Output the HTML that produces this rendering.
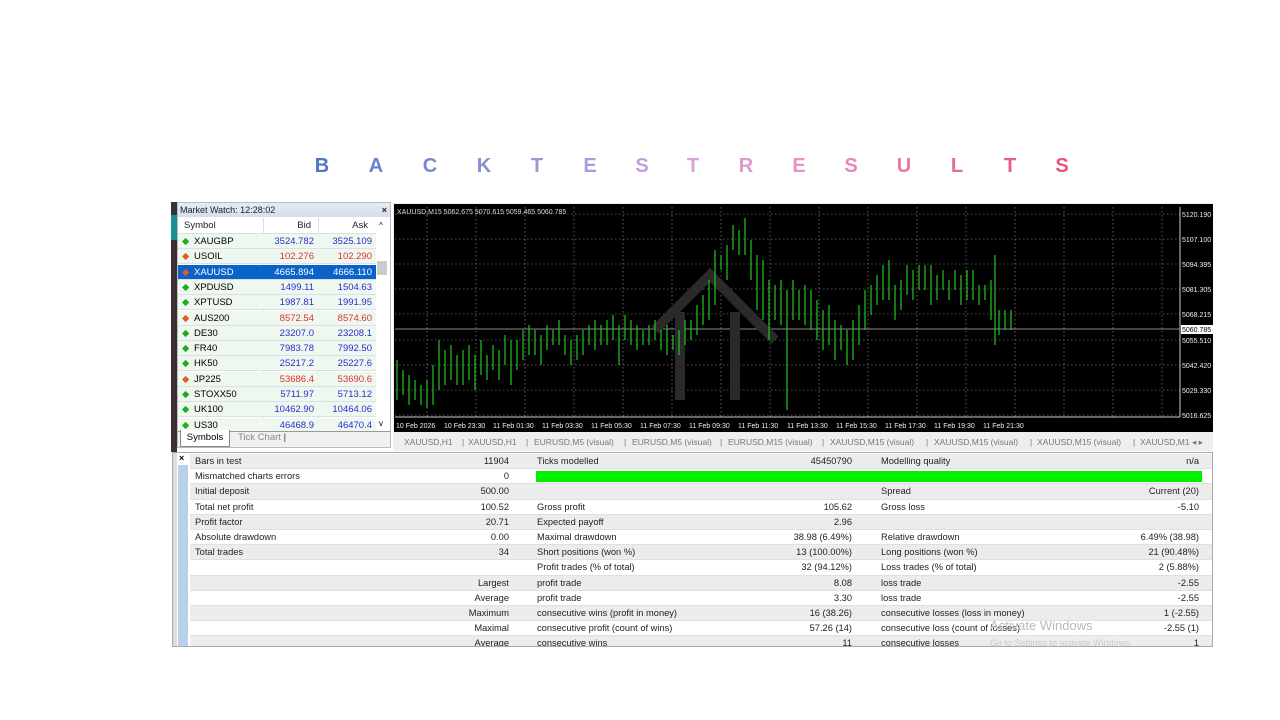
<!DOCTYPE html>
<html><head><meta charset="utf-8"><style>
*{margin:0;padding:0;box-sizing:border-box}
body{width:1280px;height:720px;background:#fff;position:relative;overflow:hidden;font-family:"Liberation Sans",sans-serif}
.t{position:absolute;top:155px;font-size:20px;font-weight:bold;transform:translateX(-50%);opacity:0.92}
.a{position:absolute;white-space:nowrap}
.mw{position:absolute;left:177px;top:202px;width:214px;height:246px;background:#fff;border:1px solid #bbb}
.row{position:absolute;left:0;width:198px;height:15px;font-size:9.5px;line-height:15px;background:#eef8ee;border-bottom:1px solid #dde}
.row span{position:absolute}
.res{position:absolute;left:172px;top:452px;width:1041px;height:195px;background:#fff;border:1px solid #aaa;overflow:hidden}
.r{position:absolute;left:17px;width:1022px;height:15.2px;font-size:9.3px;line-height:15px;color:#222;border-bottom:1px solid #e0e0e0}
.r span{position:absolute;white-space:nowrap}
</style></head><body>
<div class="t" style="left:322px;color:#3f6cb8">B</div>
<div class="t" style="left:376px;color:#5b78c2">A</div>
<div class="t" style="left:430px;color:#6e80c8">C</div>
<div class="t" style="left:484px;color:#8087cc">K</div>
<div class="t" style="left:537px;color:#9290d2">T</div>
<div class="t" style="left:590px;color:#a693d8">E</div>
<div class="t" style="left:642px;color:#be95da">S</div>
<div class="t" style="left:693px;color:#d69ad8">T</div>
<div class="t" style="left:746px;color:#dd90c8">R</div>
<div class="t" style="left:799px;color:#e38ac4">E</div>
<div class="t" style="left:851px;color:#e67eb2">S</div>
<div class="t" style="left:904px;color:#e66d9c">U</div>
<div class="t" style="left:957px;color:#e65e86">L</div>
<div class="t" style="left:1010px;color:#e65276">T</div>
<div class="t" style="left:1062px;color:#e64868">S</div>

<div class="a" style="left:171px;top:202px;width:6px;height:250px;background:#3a3230"></div>
<div class="a" style="left:171px;top:215px;width:6px;height:25px;background:#1a8f95"></div>

<div class="mw">
<div class="a" style="left:0;top:0;width:212px;height:14px;background:linear-gradient(#e4ecf6,#d4deec);font-size:9px;line-height:14px;padding-left:2px;color:#222">Market Watch: 12:28:02<span style="position:absolute;right:3px;font-weight:bold">×</span></div>
<div class="a" style="left:0;top:15px;width:198px;height:16px;font-size:9.5px;line-height:16px;border-bottom:1px solid #ddd;color:#222"><span class="a" style="left:6px">Symbol</span><span class="a" style="right:65px">Bid</span><span class="a" style="right:8px">Ask</span></div>
<div class="a" style="left:85px;top:15px;width:1px;height:212px;background:#ddd"></div>
<div class="a" style="left:140px;top:15px;width:1px;height:212px;background:#ddd"></div>
<div class="a" style="left:199px;top:58px;width:10px;height:14px;background:#ccc"></div>
<div class="a" style="left:201px;top:18px;font-size:8px">^</div>
<div class="a" style="left:201px;top:216px;font-size:8px">v</div>
</div>
<div id="mwrows" style="position:absolute;left:178px;top:234px">
<div class="row" style="top:0"><span style="left:4px;color:#2a2">◆</span><span style="left:16px">XAUGBP</span><span style="right:62px;color:#2b2bd0">3524.782</span><span style="right:4px;color:#2b2bd0">3525.109</span></div>
<div class="row" style="top:15.3px"><span style="left:4px;color:#e05a2a">◆</span><span style="left:16px">USOIL</span><span style="right:62px;color:#e03030">102.276</span><span style="right:4px;color:#e03030">102.290</span></div>
<div class="row" style="top:30.6px;background:#0a64c8;color:#fff"><span style="left:4px;color:#e05a2a">◆</span><span style="left:16px">XAUUSD</span><span style="right:62px">4665.894</span><span style="right:4px">4666.110</span></div>
<div class="row" style="top:45.9px"><span style="left:4px;color:#2a2">◆</span><span style="left:16px">XPDUSD</span><span style="right:62px;color:#2b2bd0">1499.11</span><span style="right:4px;color:#2b2bd0">1504.63</span></div>
<div class="row" style="top:61.2px"><span style="left:4px;color:#2a2">◆</span><span style="left:16px">XPTUSD</span><span style="right:62px;color:#2b2bd0">1987.81</span><span style="right:4px;color:#2b2bd0">1991.95</span></div>
<div class="row" style="top:76.5px"><span style="left:4px;color:#e05a2a">◆</span><span style="left:16px">AUS200</span><span style="right:62px;color:#e03030">8572.54</span><span style="right:4px;color:#e03030">8574.60</span></div>
<div class="row" style="top:91.8px"><span style="left:4px;color:#2a2">◆</span><span style="left:16px">DE30</span><span style="right:62px;color:#2b2bd0">23207.0</span><span style="right:4px;color:#2b2bd0">23208.1</span></div>
<div class="row" style="top:107.1px"><span style="left:4px;color:#2a2">◆</span><span style="left:16px">FR40</span><span style="right:62px;color:#2b2bd0">7983.78</span><span style="right:4px;color:#2b2bd0">7992.50</span></div>
<div class="row" style="top:122.4px"><span style="left:4px;color:#2a2">◆</span><span style="left:16px">HK50</span><span style="right:62px;color:#2b2bd0">25217.2</span><span style="right:4px;color:#2b2bd0">25227.6</span></div>
<div class="row" style="top:137.7px"><span style="left:4px;color:#e05a2a">◆</span><span style="left:16px">JP225</span><span style="right:62px;color:#e03030">53686.4</span><span style="right:4px;color:#e03030">53690.6</span></div>
<div class="row" style="top:153px"><span style="left:4px;color:#2a2">◆</span><span style="left:16px">STOXX50</span><span style="right:62px;color:#2b2bd0">5711.97</span><span style="right:4px;color:#2b2bd0">5713.12</span></div>
<div class="row" style="top:168.3px"><span style="left:4px;color:#2a2">◆</span><span style="left:16px">UK100</span><span style="right:62px;color:#2b2bd0">10462.90</span><span style="right:4px;color:#2b2bd0">10464.06</span></div>
<div class="row" style="top:183.6px"><span style="left:4px;color:#2a2">◆</span><span style="left:16px">US30</span><span style="right:62px;color:#2b2bd0">46468.9</span><span style="right:4px;color:#2b2bd0">46470.4</span></div>
</div>
<div class="a" style="left:178px;top:431px;width:212px;height:16px;background:#f0f0f0;border-top:1px solid #999;font-size:9.5px"></div>
<div class="a" style="left:180px;top:430px;width:50px;height:17px;background:#fff;border:1px solid #888;border-top:none;font-size:9.5px;line-height:15px;text-align:center">Symbols</div>
<div class="a" style="left:238px;top:432px;font-size:9.5px;color:#888">Tick Chart <span style="color:#333">|</span></div>

<svg class="a" style="left:393px;top:203px" width="820" height="248" viewBox="393 203 820 248">
<rect x="393" y="203" width="820" height="248" fill="#eee"/>
<rect x="394" y="204" width="819" height="228" fill="#000"/>
<g stroke="#9a9a9a" stroke-width="0.6" stroke-dasharray="1.5,2.5">
<line x1="395" y1="214" x2="1180" y2="214"/><line x1="395" y1="239" x2="1180" y2="239"/><line x1="395" y1="264" x2="1180" y2="264"/><line x1="395" y1="289" x2="1180" y2="289"/><line x1="395" y1="314" x2="1180" y2="314"/><line x1="395" y1="340" x2="1180" y2="340"/><line x1="395" y1="365" x2="1180" y2="365"/><line x1="395" y1="390" x2="1180" y2="390"/><line x1="395" y1="415" x2="1180" y2="415"/>
<line x1="427" y1="207" x2="427" y2="417"/><line x1="476" y1="207" x2="476" y2="417"/><line x1="525" y1="207" x2="525" y2="417"/><line x1="574" y1="207" x2="574" y2="417"/><line x1="623" y1="207" x2="623" y2="417"/><line x1="672" y1="207" x2="672" y2="417"/><line x1="721" y1="207" x2="721" y2="417"/><line x1="770" y1="207" x2="770" y2="417"/><line x1="819" y1="207" x2="819" y2="417"/><line x1="868" y1="207" x2="868" y2="417"/><line x1="917" y1="207" x2="917" y2="417"/><line x1="966" y1="207" x2="966" y2="417"/><line x1="1015" y1="207" x2="1015" y2="417"/><line x1="1064" y1="207" x2="1064" y2="417"/><line x1="1113" y1="207" x2="1113" y2="417"/><line x1="1162" y1="207" x2="1162" y2="417"/>
</g>
<line x1="395" y1="329" x2="1180" y2="329" stroke="#888" stroke-width="1"/>
<path d="M655 330 L710 275 L775 340 M680 312 V400 M735 312 V400" stroke="#2a2a2a" stroke-width="10" fill="none"/>
<line x1="1180" y1="207" x2="1180" y2="417" stroke="#ccc"/>
<line x1="395" y1="417" x2="1180" y2="417" stroke="#ccc"/>
<g stroke="#22c422" stroke-width="1.2" fill="none">
<path d="M397 360V400M403 370V395M409 375V405M415 380V400M421 385V405M427 380V408M433 365V405M439 340V390M445 350V385M451 345V380M457 355V385M463 350V385M469 345V380M475 355V390M481 340V375M487 355V380M493 345V370M499 350V380M505 335V365M511 340V385M517 340V370M523 330V360M529 325V355M535 330V355M541 335V365M547 325V350M553 330V345M559 320V345M565 335V355M571 340V365M577 335V360M583 330V355M589 325V345M595 320V350M601 325V345M607 320V345M613 315V340M619 325V365M625 315V340M631 320V345M637 325V350M643 330V345M649 325V345M655 320V340M661 330V350M667 325V355M673 335V350M679 330V355M685 320V345M691 320V340M697 305V335M703 295V325M709 280V320M715 250V305M721 255V270M727 245V280M733 225V250M739 230V255M745 218V255M751 240V280M757 255V310M763 260V320M769 280V340M775 285V320M781 280V325M787 290V410M793 280V320M799 290V320M805 285V325M811 290V330M817 300V340M823 310V350M829 305V345M835 320V360M841 325V350M847 330V365M853 320V360M859 305V345M865 290V330M871 285V315M877 275V305M883 265V300M889 260V300M895 285V320M901 280V310M907 265V295M913 270V300M919 265V290M925 265V290M931 265V305M937 275V300M943 270V290M949 280V300M955 270V290M961 275V305M967 270V300M973 270V300M979 285V305M985 285V300M991 280V320M995 255V345M999 310V335M1005 310V330M1011 310V330"/>
</g>
<text x="397" y="214" fill="#ddd" font-size="7" font-family="Liberation Sans">XAUUSD,M15  5062.675 5070.615 5059.465 5060.785</text>
<g fill="#eee" font-size="7" font-family="Liberation Sans">
<text x="396" y="428">10 Feb 2026</text><text x="444" y="428">10 Feb 23:30</text><text x="493" y="428">11 Feb 01:30</text><text x="542" y="428">11 Feb 03:30</text><text x="591" y="428">11 Feb 05:30</text><text x="640" y="428">11 Feb 07:30</text><text x="689" y="428">11 Feb 09:30</text><text x="738" y="428">11 Feb 11:30</text><text x="787" y="428">11 Feb 13:30</text><text x="836" y="428">11 Feb 15:30</text><text x="885" y="428">11 Feb 17:30</text><text x="934" y="428">11 Feb 19:30</text><text x="983" y="428">11 Feb 21:30</text>
<text x="1182" y="217">5120.190</text><text x="1182" y="242">5107.100</text><text x="1182" y="267">5094.395</text><text x="1182" y="292">5081.305</text><text x="1182" y="317">5068.215</text><text x="1182" y="343">5055.510</text><text x="1182" y="368">5042.420</text><text x="1182" y="393">5029.330</text><text x="1182" y="418">5016.625</text>
</g>
<rect x="1181" y="325" width="32" height="9" fill="#fff"/><text x="1182" y="332" fill="#000" font-size="7" font-family="Liberation Sans">5060.785</text>
<g fill="#777" font-size="8.5" font-family="Liberation Sans">
<text x="404" y="445">XAUUSD,H1</text><text x="462" y="445">|</text><text x="468" y="445">XAUUSD,H1</text><text x="526" y="445">|</text><text x="534" y="445">EURUSD,M5 (visual)</text><text x="624" y="445">|</text><text x="632" y="445">EURUSD,M5 (visual)</text><text x="720" y="445">|</text><text x="728" y="445">EURUSD,M15 (visual)</text><text x="822" y="445">|</text><text x="830" y="445">XAUUSD,M15 (visual)</text><text x="926" y="445">|</text><text x="934" y="445">XAUUSD,M15 (visual)</text><text x="1030" y="445">|</text><text x="1037" y="445">XAUUSD,M15 (visual)</text><text x="1133" y="445">|</text><text x="1140" y="445">XAUUSD,M1 ◂ ▸</text>
</g>
</svg>

<div class="res">
<div class="a" style="left:0;top:0;width:4px;height:195px;background:#ddd"></div>
<div class="a" style="left:5px;top:12px;width:10px;height:183px;background:#b8d0ea"></div>
<div class="a" style="left:6px;top:0;font-size:9px;font-weight:bold">×</div>
<div class="r" style="top:1px;background:#ececec"><span style="left:5px">Bars in test</span><span style="right:703px">11904</span><span style="left:347px">Ticks modelled</span><span style="right:360px">45450790</span><span style="left:691px">Modelling quality</span><span style="right:13px">n/a</span></div>
<div class="r" style="top:16.2px;background:#fff"><span style="left:5px">Mismatched charts errors</span><span style="right:703px">0</span><span style="left:346px;top:2px;width:666px;height:11px;background:#00f000"></span></div>
<div class="r" style="top:31.4px;background:#ececec"><span style="left:5px">Initial deposit</span><span style="right:703px">500.00</span><span style="left:691px">Spread</span><span style="right:13px">Current (20)</span></div>
<div class="r" style="top:46.6px;background:#fff"><span style="left:5px">Total net profit</span><span style="right:703px">100.52</span><span style="left:347px">Gross profit</span><span style="right:360px">105.62</span><span style="left:691px">Gross loss</span><span style="right:13px">-5.10</span></div>
<div class="r" style="top:61.8px;background:#ececec"><span style="left:5px">Profit factor</span><span style="right:703px">20.71</span><span style="left:347px">Expected payoff</span><span style="right:360px">2.96</span></div>
<div class="r" style="top:77px;background:#fff"><span style="left:5px">Absolute drawdown</span><span style="right:703px">0.00</span><span style="left:347px">Maximal drawdown</span><span style="right:360px">38.98 (6.49%)</span><span style="left:691px">Relative drawdown</span><span style="right:13px">6.49% (38.98)</span></div>
<div class="r" style="top:92.2px;background:#ececec"><span style="left:5px">Total trades</span><span style="right:703px">34</span><span style="left:347px">Short positions (won %)</span><span style="right:360px">13 (100.00%)</span><span style="left:691px">Long positions (won %)</span><span style="right:13px">21 (90.48%)</span></div>
<div class="r" style="top:107.4px;background:#fff"><span style="left:347px">Profit trades (% of total)</span><span style="right:360px">32 (94.12%)</span><span style="left:691px">Loss trades (% of total)</span><span style="right:13px">2 (5.88%)</span></div>
<div class="r" style="top:122.6px;background:#ececec"><span style="right:703px">Largest</span><span style="left:347px">profit trade</span><span style="right:360px">8.08</span><span style="left:691px">loss trade</span><span style="right:13px">-2.55</span></div>
<div class="r" style="top:137.8px;background:#fff"><span style="right:703px">Average</span><span style="left:347px">profit trade</span><span style="right:360px">3.30</span><span style="left:691px">loss trade</span><span style="right:13px">-2.55</span></div>
<div class="r" style="top:153px;background:#ececec"><span style="right:703px">Maximum</span><span style="left:347px">consecutive wins (profit in money)</span><span style="right:360px">16 (38.26)</span><span style="left:691px">consecutive losses (loss in money)</span><span style="right:13px">1 (-2.55)</span></div>
<div class="r" style="top:168.2px;background:#fff"><span style="right:703px">Maximal</span><span style="left:347px">consecutive profit (count of wins)</span><span style="right:360px">57.26 (14)</span><span style="left:691px">consecutive loss (count of losses)</span><span style="right:13px">-2.55 (1)</span><span style="left:800px;top:-3px;font-size:13px;color:#bbb">Activate Windows</span></div>
<div class="r" style="top:183.4px;background:#ececec"><span style="right:703px">Average</span><span style="left:347px">consecutive wins</span><span style="right:360px">11</span><span style="left:691px">consecutive losses</span><span style="right:13px">1</span><span style="left:800px;top:0;font-size:9px;color:#ccc">Go to Settings to activate Windows.</span></div>
</div>
</body></html>
